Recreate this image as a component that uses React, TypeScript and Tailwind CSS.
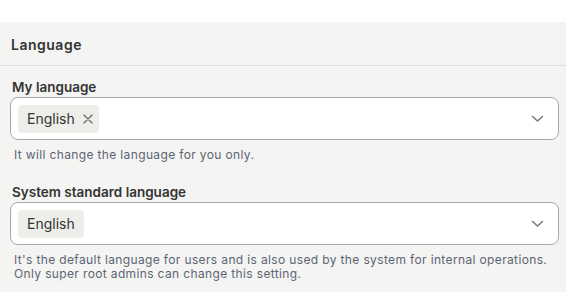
type Field = {
    readonly id: string;
    readonly label: string;
    readonly value: string;
    readonly removable: boolean;
    readonly help: ReadonlyArray<string>;
};

const fields: ReadonlyArray<Field> = [
    {
        id: "my",
        label: "My language",
        value: "English",
        removable: true,
        help: ["It will change the language for you only."],
    },
    {
        id: "system",
        label: "System standard language",
        value: "English",
        removable: false,
        help: [
            "It's the default language for users and is also used by the system for internal operations.",
            "Only super root admins can change this setting.",
        ],
    },
];

function Chevron() {
    return (
        <svg width="13" height="8" viewBox="0 0 13 8" fill="none" className="shrink-0">
            <polyline points="1.5,1.5 6.5,6 11.5,1.5" stroke="#7a7a7a" strokeWidth="1.6" strokeLinecap="round" strokeLinejoin="round" />
        </svg>
    );
}

function Cross() {
    return (
        <svg width="10" height="10" viewBox="0 0 10 10" fill="none" className="shrink-0">
            <path d="M1 1L9 9M9 1L1 9" stroke="#707070" strokeWidth="1.4" strokeLinecap="round" />
        </svg>
    );
}

export default function App() {
    return (
        <div className="h-[292px] w-[566px] overflow-hidden bg-white font-['Inter',sans-serif] text-[#333]">
            <div className="h-[22px]" />
            <section className="h-[270px] bg-[#f4f4f2]">
                <div className="flex h-[44px] items-center border-b border-[#dcdcda] pl-[11px]">
                    <h2 className="pt-[2px] text-[14px] font-semibold tracking-[0.5px] text-[#333]">Language</h2>
                </div>

                <div className="flex flex-col pl-[10px] pr-[7px] pt-[12px]">
                    {fields.map((field, i) => (
                        <div key={field.id} className={i > 0 ? "mt-[21px] flex flex-col" : "flex flex-col"}>
                            <label className="pl-[2px] text-[13.5px] font-semibold leading-[18px] text-[#333]">
                                {field.label}
                            </label>
                            <div className="mt-[1px] flex h-[43px] items-center justify-between rounded-lg border border-[#a9a9a9] bg-white pl-[7px] pr-[14px]">
                                <span className="flex h-[28px] items-center gap-[8px] rounded bg-[#edeeea] pl-[9px] pr-[6px] text-[14px] text-[#333]">
                                    <span className={field.removable ? "" : "pr-[3px]"}>{field.value}</span>
                                    {field.removable && <Cross />}
                                </span>
                                <Chevron />
                            </div>
                            <div className="mt-[8px] whitespace-nowrap pl-[4px] text-[12px] leading-[14px] tracking-[0.36px] text-[#5c6474]">
                                {field.help.map((line) => (
                                    <p key={line}>{line}</p>
                                ))}
                            </div>
                        </div>
                    ))}
                </div>
            </section>
        </div>
    );
}
